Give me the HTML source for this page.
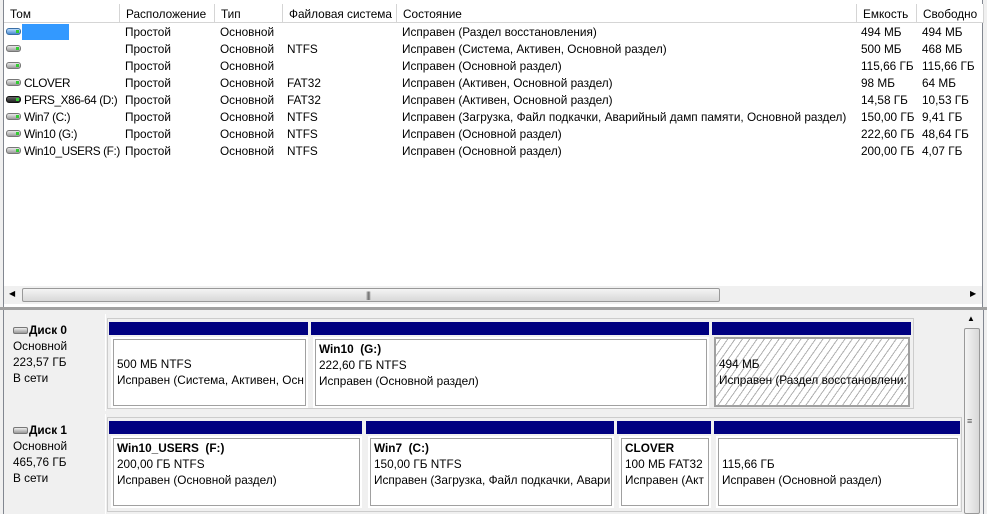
<!DOCTYPE html><html><head><meta charset="utf-8"><style>
*{margin:0;padding:0;box-sizing:border-box}
body{width:987px;height:514px;overflow:hidden;background:#f0f0f0;font:11.8px "Liberation Sans","DejaVu Sans",sans-serif;color:#000;position:relative}
.a{position:absolute;white-space:nowrap}
.top{position:absolute;left:3px;top:0;width:980px;height:307px;background:#fff;border-left:1px solid #828790;border-right:1px solid #828790}
.hd{position:absolute;top:4px;height:19px;border-right:1px solid #d5d5d5;border-bottom:1px solid #d5d5d5;padding:3px 0 0 6px;background:#fff;white-space:nowrap;overflow:hidden}
.r{position:absolute;height:17px;line-height:17px}
.ic{position:absolute;left:6px;width:15px;height:7px;border-radius:3px;background:linear-gradient(#e8e8e8,#9a9a9a);border:1px solid #777}
.ic::after{content:"";position:absolute;right:1px;top:1px;width:3px;height:3px;background:#3c3}
.bar{position:absolute;background:#000080;height:13px}
.box{position:absolute;background:#fff;border:1px solid #a0a0a0;outline:2px solid #fff;overflow:hidden;padding-left:3px;line-height:16px;white-space:nowrap}
.lbl{position:absolute;background:#f0f0f0;left:4px;width:102px;border-right:1px solid #fff;padding:8px 0 0 9px;line-height:16px}
</style></head><body>
<div class="top">
<div class="hd" style="left:0;width:116px">Том</div>
<div class="hd" style="left:116px;width:95px">Расположение</div>
<div class="hd" style="left:211px;width:68px">Тип</div>
<div class="hd" style="left:279px;width:114px">Файловая система</div>
<div class="hd" style="left:393px;width:460px">Состояние</div>
<div class="hd" style="left:853px;width:60px">Емкость</div>
<div class="hd" style="left:913px;width:67px">Свободно</div>
</div>
<div id="rows"></div>
<div class="a" style="left:22px;top:24px;width:47px;height:16px;background:#3399ff"></div>
<div class="ic" style="top:28px;background:linear-gradient(#bfe0ff,#4a8ad0);border-color:#3a6ea5"></div>
<script>
var d=[["","Простой","Основной","","Исправен (Раздел восстановления)","494 МБ","494 МБ"],
["","Простой","Основной","NTFS","Исправен (Система, Активен, Основной раздел)","500 МБ","468 МБ"],
["","Простой","Основной","","Исправен (Основной раздел)","115,66 ГБ","115,66 ГБ"],
["CLOVER","Простой","Основной","FAT32","Исправен (Активен, Основной раздел)","98 МБ","64 МБ"],
["PERS_X86-64 (D:)","Простой","Основной","FAT32","Исправен (Активен, Основной раздел)","14,58 ГБ","10,53 ГБ"],
["Win7 (C:)","Простой","Основной","NTFS","Исправен (Загрузка, Файл подкачки, Аварийный дамп памяти, Основной раздел)","150,00 ГБ","9,41 ГБ"],
["Win10 (G:)","Простой","Основной","NTFS","Исправен (Основной раздел)","222,60 ГБ","48,64 ГБ"],
["Win10_USERS (F:)","Простой","Основной","NTFS","Исправен (Основной раздел)","200,00 ГБ","4,07 ГБ"]];
var x=[24,125,220,287,402,861,922],h="";
d.forEach(function(r,i){var t=24+i*17;if(i>0)h+='<div class="ic" style="top:'+(t+4)+'px'+(i==4?';background:linear-gradient(#666,#222);border-color:#111':'')+'"></div>';
r.forEach(function(c,j){h+='<div class="a r" style="left:'+x[j]+'px;top:'+t+'px'+(j==0?';letter-spacing:-0.4px':'')+'">'+c+'</div>'})});
document.getElementById('rows').innerHTML=h;
</script>
<div class="a" style="left:4px;top:286px;width:978px;height:18px;background:#f0f0f0"></div>
<div class="a" style="left:9px;top:289px;font-size:8px">◀</div>
<div class="a" style="left:970px;top:289px;font-size:8px">▶</div>
<div class="a" style="left:22px;top:288px;width:698px;height:14px;border:1px solid #999;border-radius:2px;background:linear-gradient(#f4f4f4,#d8d8d8)"></div>
<div class="a" style="left:366px;top:290px;font-size:9px;color:#555;letter-spacing:-1px">|||</div>
<div class="a" style="left:0;top:307px;width:987px;height:3px;background:#a0a0a0"></div>
<div class="a" style="left:3px;top:310px;width:1px;height:204px;background:#828790"></div>
<div class="a" style="left:983px;top:310px;width:1px;height:204px;background:#828790"></div>
<div class="a" style="left:962px;top:313px;width:19px;height:201px;background:#f0f0f0"></div>
<div class="a" style="left:967px;top:314px;font-size:8px">▲</div>
<div class="a" style="left:964px;top:328px;width:16px;height:186px;border:1px solid #999;border-radius:2px;background:linear-gradient(90deg,#f4f4f4,#d8d8d8)"></div>
<div class="a" style="left:967px;top:420px;font-size:9px;color:#555;line-height:3px">≡</div>
<div class="lbl" style="top:314px;height:97px"><b><span style="display:inline-block;width:15px;height:7px;border:1px solid #777;border-radius:2px;background:linear-gradient(#eee,#999);margin-right:1px"></span>Диск 0</b><br>Основной<br>223,57 ГБ<br>В сети</div>
<div class="a" style="left:107px;top:318px;width:807px;height:91px;border:1px solid #ccc;background:#f0f0f0"></div>
<div class="bar" style="left:109px;top:322px;width:199px"></div>
<div class="bar" style="left:311px;top:322px;width:398px"></div>
<div class="bar" style="left:712px;top:322px;width:199px"></div>
<div class="box" style="left:113px;top:339px;width:193px;height:67px;padding-top:16px">500 МБ NTFS<br>Исправен (Система, Активен, Осн</div>
<div class="box" style="left:315px;top:339px;width:392px;height:67px;padding-top:1px"><b>Win10&nbsp; (G:)</b><br>222,60 ГБ NTFS<br>Исправен (Основной раздел)</div>
<div class="box" style="left:714px;top:337px;width:196px;height:70px;border:2px solid #a0a0a0;outline:none;padding-top:17px;padding-left:3px;background:repeating-linear-gradient(-55deg,#fff 0 5px,#b0b0b0 5px 6px)">494 МБ<br>Исправен (Раздел восстановлени:</div>
<div class="lbl" style="top:414px;height:100px"><b><span style="display:inline-block;width:15px;height:7px;border:1px solid #777;border-radius:2px;background:linear-gradient(#eee,#999);margin-right:1px"></span>Диск 1</b><br>Основной<br>465,76 ГБ<br>В сети</div>
<div class="a" style="left:107px;top:417px;width:855px;height:95px;border:1px solid #ccc;background:#f0f0f0"></div>
<div class="bar" style="left:109px;top:421px;width:253px"></div>
<div class="bar" style="left:366px;top:421px;width:248px"></div>
<div class="bar" style="left:617px;top:421px;width:94px"></div>
<div class="bar" style="left:714px;top:421px;width:246px"></div>
<div class="box" style="left:113px;top:438px;width:247px;height:68px;padding-top:1px"><b>Win10_USERS&nbsp; (F:)</b><br>200,00 ГБ NTFS<br>Исправен (Основной раздел)</div>
<div class="box" style="left:370px;top:438px;width:242px;height:68px;padding-top:1px"><b>Win7&nbsp; (C:)</b><br>150,00 ГБ NTFS<br>Исправен (Загрузка, Файл подкачки, Авари</div>
<div class="box" style="left:621px;top:438px;width:88px;height:68px;padding-top:1px"><b>CLOVER</b><br>100 МБ FAT32<br>Исправен (Акт</div>
<div class="box" style="left:718px;top:438px;width:240px;height:68px;padding-top:17px">115,66 ГБ<br>Исправен (Основной раздел)</div>
</body></html>
